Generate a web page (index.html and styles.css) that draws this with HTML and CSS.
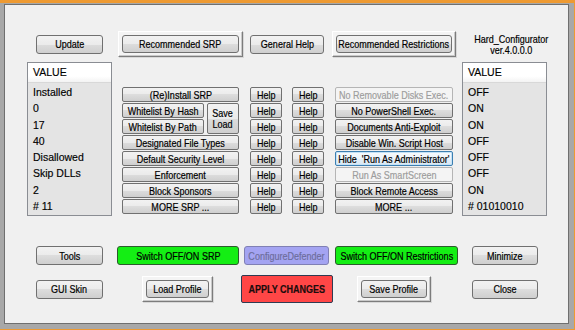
FILE: index.html
```html
<!DOCTYPE html>
<html>
<head>
<meta charset="utf-8">
<title>Hard_Configurator</title>
<link rel="stylesheet" href="styles.css">
</head>
<body>
<div class="window">
  <div class="panel">
    <div class="row row-top">
      <div class="btn w-update"><span class="t">Update</span></div>
      <div class="frame frame-srp"><div class="btn"><span class="t">Recommended SRP</span></div></div>
      <div class="btn w-general"><span class="t">General Help</span></div>
      <div class="frame frame-restr"><div class="btn"><span class="t">Recommended Restrictions</span></div></div>
      <div class="title"><span class="t">Hard_Configurator<br>ver.4.0.0.0</span></div>
    </div>

    <div class="row row-main">
      <div class="list list-left">
        <div class="list-head">VALUE</div>
        <div class="list-body">
          <div class="item">Installed</div>
          <div class="item">0</div>
          <div class="item">17</div>
          <div class="item">40</div>
          <div class="item">Disallowed</div>
          <div class="item">Skip DLLs</div>
          <div class="item">2</div>
          <div class="item"># 11</div>
        </div>
      </div>

      <div class="grid">
        <div class="btn c-srp r1"><span class="t">(Re)Install SRP</span></div>
        <div class="wl">
          <div class="btn"><span class="t">Whitelist By Hash</span></div>
          <div class="btn save"><span class="t">Save<br>Load</span></div>
          <div class="btn"><span class="t">Whitelist By Path</span></div>
        </div>
        <div class="btn c-srp r4"><span class="t">Designated File Types</span></div>
        <div class="btn c-srp r5"><span class="t">Default Security Level</span></div>
        <div class="btn c-srp r6"><span class="t">Enforcement</span></div>
        <div class="btn c-srp r7"><span class="t">Block Sponsors</span></div>
        <div class="btn c-srp r8"><span class="t">MORE SRP ...</span></div>

        <div class="btn c-h1 r1"><span class="t">Help</span></div>
        <div class="btn c-h1 r2"><span class="t">Help</span></div>
        <div class="btn c-h1 r3"><span class="t">Help</span></div>
        <div class="btn c-h1 r4"><span class="t">Help</span></div>
        <div class="btn c-h1 r5"><span class="t">Help</span></div>
        <div class="btn c-h1 r6"><span class="t">Help</span></div>
        <div class="btn c-h1 r7"><span class="t">Help</span></div>
        <div class="btn c-h1 r8"><span class="t">Help</span></div>

        <div class="btn c-h2 r1"><span class="t">Help</span></div>
        <div class="btn c-h2 r2"><span class="t">Help</span></div>
        <div class="btn c-h2 r3"><span class="t">Help</span></div>
        <div class="btn c-h2 r4"><span class="t">Help</span></div>
        <div class="btn c-h2 r5"><span class="t">Help</span></div>
        <div class="btn c-h2 r6"><span class="t">Help</span></div>
        <div class="btn c-h2 r7"><span class="t">Help</span></div>
        <div class="btn c-h2 r8"><span class="t">Help</span></div>

        <div class="btn c-res r1 disabled"><span class="t">No Removable Disks Exec.</span></div>
        <div class="btn c-res r2"><span class="t">No PowerShell Exec.</span></div>
        <div class="btn c-res r3"><span class="t">Documents Anti-Exploit</span></div>
        <div class="btn c-res r4"><span class="t">Disable Win. Script Host</span></div>
        <div class="btn c-res r5 focused"><span class="t">Hide&nbsp; 'Run As Administrator'</span></div>
        <div class="btn c-res r6 disabled"><span class="t">Run As SmartScreen</span></div>
        <div class="btn c-res r7"><span class="t">Block Remote Access</span></div>
        <div class="btn c-res r8"><span class="t">MORE ...</span></div>
      </div>

      <div class="list list-right">
        <div class="list-head">VALUE</div>
        <div class="list-body">
          <div class="item">OFF</div>
          <div class="item">ON</div>
          <div class="item">ON</div>
          <div class="item">OFF</div>
          <div class="item">OFF</div>
          <div class="item">OFF</div>
          <div class="item">ON</div>
          <div class="item"># 01010010</div>
        </div>
      </div>
    </div>

    <div class="row row-c">
      <div class="btn w-side"><span class="t">Tools</span></div>
      <div class="btn green w-gsrp"><span class="t">Switch OFF/ON SRP</span></div>
      <div class="btn lavender w-def"><span class="t">ConfigureDefender</span></div>
      <div class="btn green w-gres"><span class="t">Switch OFF/ON Restrictions</span></div>
      <div class="btn w-side w-min"><span class="t">Minimize</span></div>
    </div>

    <div class="row row-d">
      <div class="btn w-side"><span class="t">GUI Skin</span></div>
      <div class="frame frame-load"><div class="btn"><span class="t">Load Profile</span></div></div>
      <div class="btn apply"><span class="t">APPLY CHANGES</span></div>
      <div class="frame frame-save"><div class="btn"><span class="t">Save Profile</span></div></div>
      <div class="btn w-side w-close"><span class="t">Close</span></div>
    </div>
  </div>
</div>
</body>
</html>
```

FILE: styles.css
```css
* { box-sizing: border-box; }

html, body {
  margin: 0;
  padding: 0;
}

body {
  width: 575px;
  height: 330px;
  background: #ee9a32;
  font-family: "Liberation Sans", Arial, sans-serif;
  font-size: 11px;
  color: #000;
  overflow: hidden;
}

/* narrow (Arial Narrow-like) text */
.t {
  display: inline-block;
  transform: scaleX(0.82);
  white-space: nowrap;
  -webkit-text-stroke: 0.2px currentColor;
}

.window {
  margin: 3px 1px 0 0;
  width: 574px;
  height: 326px;
  background: #a8a8a8;
  padding: 1px 5px 5px 4px;
}

.panel {
  height: 100%;
  border: 1px solid #6f6f6f;
  background: #f0f0f0;
}

.row {
  display: flex;
  align-items: center;
}

/* generic button */
.btn {
  display: flex;
  align-items: center;
  justify-content: center;
  text-align: center;
  height: 19px;
  border: 1px solid #707070;
  border-radius: 3px;
  background: linear-gradient(#f2f2f2 0%, #ebebeb 50%, #dddddd 50%, #cfcfcf 100%);
  line-height: 12px;
  white-space: nowrap;
  color: #000;
}

.frame {
  height: 26px;
  padding: 3px;
  border: 1px solid;
  border-color: #ffffff #7c7c7c #7c7c7c #ffffff;
  box-shadow: inset -1px -1px 0 #c9c9c9, 1px 1px 0 #d8d8d8;
  background: #f4f4f4;
}
.frame .btn { height: 100%; }

/* top row */
.row-top {
  margin-top: 26px;
  height: 26px;
}
.w-update { margin-left: 31px; width: 67px; }
.frame-srp { margin-left: 15px; width: 125px; }
.w-general { margin-left: 7px; width: 74px; }
.frame-restr { margin-left: 8px; width: 124px; }
.title {
  align-self: flex-start;
  margin-left: 10px;
  width: 74px;
  padding-top: 3px;
  text-align: center;
  line-height: 11px;
}

/* main row */
.row-main {
  margin-top: 5px;
  height: 154px;
  align-items: stretch;
}

.list {
  width: 85px;
  height: 154px;
  border: 1px solid #8a8d93;
  background: #e4e4e4;
  font-size: 10.5px;
  -webkit-text-stroke: 0.15px currentColor;
}
.list-left { margin-left: 22px; }
.list-right { margin-left: 9px; }

.list-head {
  height: 20px;
  line-height: 19px;
  padding-left: 5px;
  background: linear-gradient(#ffffff 0%, #ffffff 70%, #f3f3f3 100%);
  border-bottom: 1px solid #d8d8d8;
}
.list-body { padding-top: 1px; }
.item {
  height: 16.25px;
  line-height: 16.25px;
  padding-left: 5px;
}

.grid {
  margin-left: 10px;
  margin-top: 25px;
  display: grid;
  grid-template-columns: 117px 11px 32px 10px 32px 11px 118px;
  grid-template-rows: repeat(8, 15px);
  row-gap: 1px;
  align-self: flex-start;
}
.grid .btn { height: 15px; border-radius: 2px; }

.c-srp { grid-column: 1; }
.c-h1 { grid-column: 3; }
.c-h2 { grid-column: 5; }
.c-res { grid-column: 7; }
.r1 { grid-row: 1; }
.r2 { grid-row: 2; }
.r3 { grid-row: 3; }
.r4 { grid-row: 4; }
.r5 { grid-row: 5; }
.r6 { grid-row: 6; }
.r7 { grid-row: 7; }
.r8 { grid-row: 8; }

.wl {
  grid-column: 1;
  grid-row: 2 / 4;
  display: grid;
  grid-template-columns: 82px 32px;
  grid-template-rows: 15px 15px;
  column-gap: 3px;
  row-gap: 1px;
}
.wl .save {
  grid-column: 2;
  grid-row: 1 / 3;
  height: 31px;
  line-height: 11px;
}

.btn.disabled {
  background: #f4f4f4;
  border-color: #b5b5b5;
  color: #9d9d9d;
}
.btn.focused {
  border-color: #3c7fb1;
  background: linear-gradient(#f6fafd 0%, #eef5fb 50%, #e3eef7 50%, #dae8f3 100%);
  box-shadow: inset 0 0 0 1px #c5e2f6;
}

/* row C */
.row-c {
  margin-top: 30px;
  height: 19px;
}
.w-side { margin-left: 31px; width: 67px; }
.w-min { margin-left: 14px; width: 66px; }

.green {
  background: #14ee14;
  border-color: #2d5a2d;
}
.lavender {
  background: #a4a4f2;
  border-color: #8080b4;
  color: #6d6d9c;
}
.w-gsrp { margin-left: 14px; width: 122px; }
.w-def { margin-left: 5px; width: 85px; }
.w-gres { margin-left: 6px; width: 123px; }

/* row D */
.row-d {
  margin-top: 10px;
  height: 28px;
}
.frame-load { margin-left: 39px; width: 71px; }
.apply {
  margin-left: 28px;
  width: 92px;
  height: 28px;
  background: #ff4646;
  border: 1px solid #2e3b52;
  border-radius: 2px;
  font-weight: bold;
  color: #1c0c0c;
}
.frame-save { margin-left: 24px; width: 74px; }
.w-close { margin-left: 41px; width: 66px; }
```
